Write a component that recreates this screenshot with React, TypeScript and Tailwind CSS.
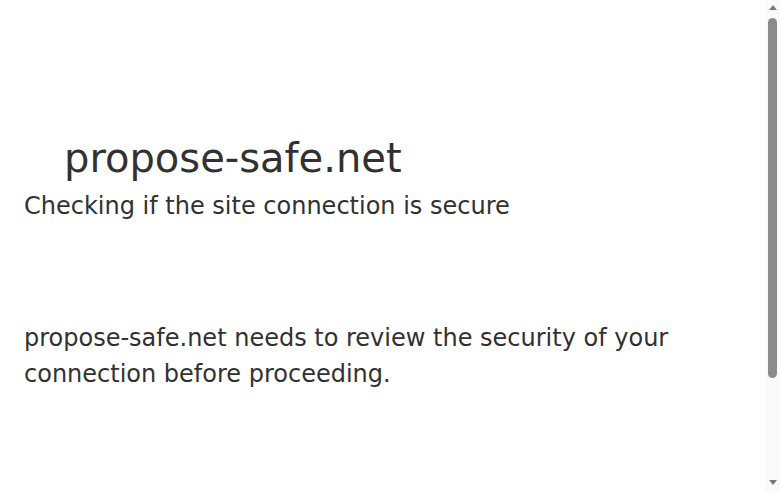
export default function App() {
  return (
    <div
      className="flex h-[493px] bg-white text-[#313131]"
      style={{ fontFamily: '"DejaVu Sans", sans-serif' }}
    >
      <div className="flex-1 overflow-hidden">
        <div className="my-32 mx-auto max-w-[60rem] pl-6">
          <h1 className="flex items-center text-[2.5rem] leading-[3.75rem] font-medium">
            <span className="w-8 h-8 mr-2 shrink-0" />
            propose-safe.net
          </h1>
          <h2 className="text-2xl leading-9 font-medium">Checking if the site connection is secure</h2>
          <div className="h-24" />
          <div className="text-2xl leading-9 pr-6">
            propose-safe.net needs to review the security of your connection before proceeding.
          </div>
        </div>
      </div>
      {/* scrollbar */}
      <div className="w-[15px] shrink-0 flex flex-col items-center bg-[#fafafa]">
        <div className="h-3 w-[15px] shrink-0 flex items-end justify-center pb-[2px]">
          <div className="w-0 h-0 border-x-[4.5px] border-x-transparent border-b-[5px] border-b-[#7a7a7a]" />
        </div>
        <div className="mt-[6px] h-[360px] w-[9px] rounded-full bg-[#8b8b8b] shrink-0" />
        <div className="flex-1" />
        <div className="h-[15px] w-[15px] shrink-0 flex items-start justify-center pt-[2px]">
          <div className="w-0 h-0 border-x-[4.5px] border-x-transparent border-t-[5px] border-t-[#7a7a7a]" />
        </div>
      </div>
    </div>
  );
}
